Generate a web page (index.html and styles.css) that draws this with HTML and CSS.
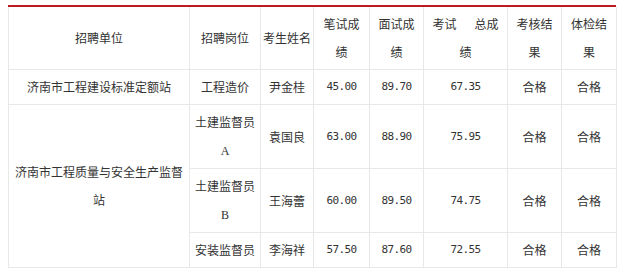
FILE: index.html
```html
<!DOCTYPE html>
<html lang="zh-CN">
<head>
<meta charset="utf-8">
<title>招聘结果</title>
<link rel="stylesheet" href="styles.css">
</head>
<body>
<div class="wrap">
  <table class="result">
    <colgroup>
      <col class="c1"><col class="c2"><col class="c3"><col class="c4">
      <col class="c5"><col class="c6"><col class="c7"><col class="c8">
    </colgroup>
    <tbody>
      <tr>
        <td>招聘单位</td>
        <td>招聘岗位</td>
        <td>考生姓名</td>
        <td>笔试成<br>绩</td>
        <td>面试成<br>绩</td>
        <td>考试<span class="gap"></span>总成<br>绩</td>
        <td>考核结<br>果</td>
        <td>体检结<br>果</td>
      </tr>
      <tr>
        <td>济南市工程建设标准定额站</td>
        <td>工程造价</td>
        <td>尹金桂</td>
        <td class="num">45.00</td>
        <td class="num">89.70</td>
        <td class="num">67.35</td>
        <td>合格</td>
        <td>合格</td>
      </tr>
      <tr>
        <td rowspan="3">济南市工程质量与安全生产监督<br>站</td>
        <td>土建监督员<br><span class="letter">A</span></td>
        <td>袁国良</td>
        <td class="num">63.00</td>
        <td class="num">88.90</td>
        <td class="num">75.95</td>
        <td>合格</td>
        <td>合格</td>
      </tr>
      <tr>
        <td>土建监督员<br><span class="letter">B</span></td>
        <td>王海蕾</td>
        <td class="num">60.00</td>
        <td class="num">89.50</td>
        <td class="num">74.75</td>
        <td>合格</td>
        <td>合格</td>
      </tr>
      <tr>
        <td>安装监督员</td>
        <td>李海祥</td>
        <td class="num">57.50</td>
        <td class="num">87.60</td>
        <td class="num">72.55</td>
        <td>合格</td>
        <td>合格</td>
      </tr>
    </tbody>
  </table>
</div>
</body>
</html>
```

FILE: styles.css
```css
html, body {
  margin: 0;
  padding: 0;
  background: #ffffff;
}

body {
  padding: 5px 0 0 8px;
  font-family: "Noto Sans CJK SC", "Noto Sans", sans-serif;
  font-size: 12px;
  color: #333333;
}

.wrap {
  width: 608px;
  border-top: 2px solid #bd1a20;
}

.result {
  width: 608px;
  border-collapse: collapse;
  table-layout: fixed;
}

.c1 { width: 181px; }
.c2 { width: 71px; }
.c3 { width: 53px; }
.c4 { width: 56px; }
.c5 { width: 54px; }
.c6 { width: 84px; }
.c7 { width: 54px; }
.c8 { width: 55px; }

.result td {
  border: 1px solid #e8e8e8;
  border-top: 0;
  padding: 3px 0;
  line-height: 28px;
  text-align: center;
  vertical-align: middle;
  white-space: nowrap;
  overflow: hidden;
}

.result tr:first-child td {
  border-top: 0;
}

.num {
  font-family: "DejaVu Sans Mono", "Liberation Mono", monospace;
  font-size: 11px;
  letter-spacing: -0.6px;
}

.letter {
  font-family: "Liberation Serif", serif;
  font-size: 12px;
}

.gap {
  display: inline-block;
  width: 18px;
}
```
